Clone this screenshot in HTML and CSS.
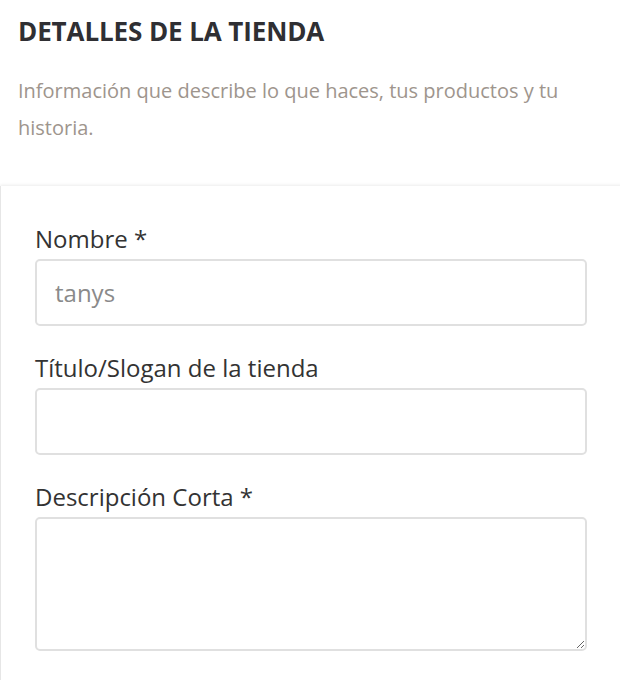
FILE: index.html
```html
<!DOCTYPE html>
<html lang="es">
<head>
<meta charset="utf-8">
<title>Detalles de la tienda</title>
<link rel="stylesheet" href="styles.css">
</head>
<body>
<div class="page">
  <header class="intro">
    <h2 class="intro-title">DETALLES DE LA TIENDA</h2>
    <p class="intro-text">Información que describe lo que haces, tus productos y tu historia.</p>
  </header>
  <section class="card">
    <div class="field">
      <label class="field-label" for="nombre">Nombre *</label>
      <input class="field-input" id="nombre" type="text" value="tanys">
    </div>
    <div class="field">
      <label class="field-label" for="titulo">Título/Slogan de la tienda</label>
      <input class="field-input" id="titulo" type="text">
    </div>
    <div class="field">
      <label class="field-label" for="desc">Descripción Corta *</label>
      <textarea class="field-input field-textarea" id="desc"></textarea>
    </div>
  </section>
</div>
</body>
</html>
```

FILE: styles.css
```css
* { box-sizing: border-box; }

html, body {
  margin: 0;
  background: #ffffff;
  overflow: hidden;
}

.page {
  width: 620px;
  height: 680px;
  overflow: hidden;
  font-family: "Open Sans", Lato, sans-serif;
}

.intro {
  padding: 16px 30px 0 18px;
}

.intro-title {
  margin: 0;
  font-size: 26px;
  line-height: 30px;
  font-weight: 700;
  color: #2f2f33;
  letter-spacing: -0.1px;
}

.intro-text {
  margin: 26px 0 0 0;
  font-size: 20px;
  line-height: 37px;
  color: #9e958d;
}

.card {
  margin: 40px 0 0 0;
  width: 660px;
  min-height: 520px;
  border-left: 1px solid #e6e6e6;
  box-shadow: 0 -1px 3px rgba(0, 0, 0, 0.08);
  padding: 41px 0 20px 34px;
  display: flex;
  flex-direction: column;
  gap: 30px;
}

.field {
  display: flex;
  flex-direction: column;
  gap: 8px;
  width: 552px;
}

.field-label {
  font-size: 24px;
  line-height: 24px;
  color: #333333;
}

.field-input {
  font-family: inherit;
  width: 552px;
  height: 67px;
  border: 2px solid #e0e0e0;
  border-radius: 5px;
  padding: 0 18px;
  font-size: 24px;
  color: #8a8a8a;
  background: #fff;
  outline: none;
}

.field-textarea {
  height: 134px;
  resize: vertical;
  padding: 12px 18px;
}
```
